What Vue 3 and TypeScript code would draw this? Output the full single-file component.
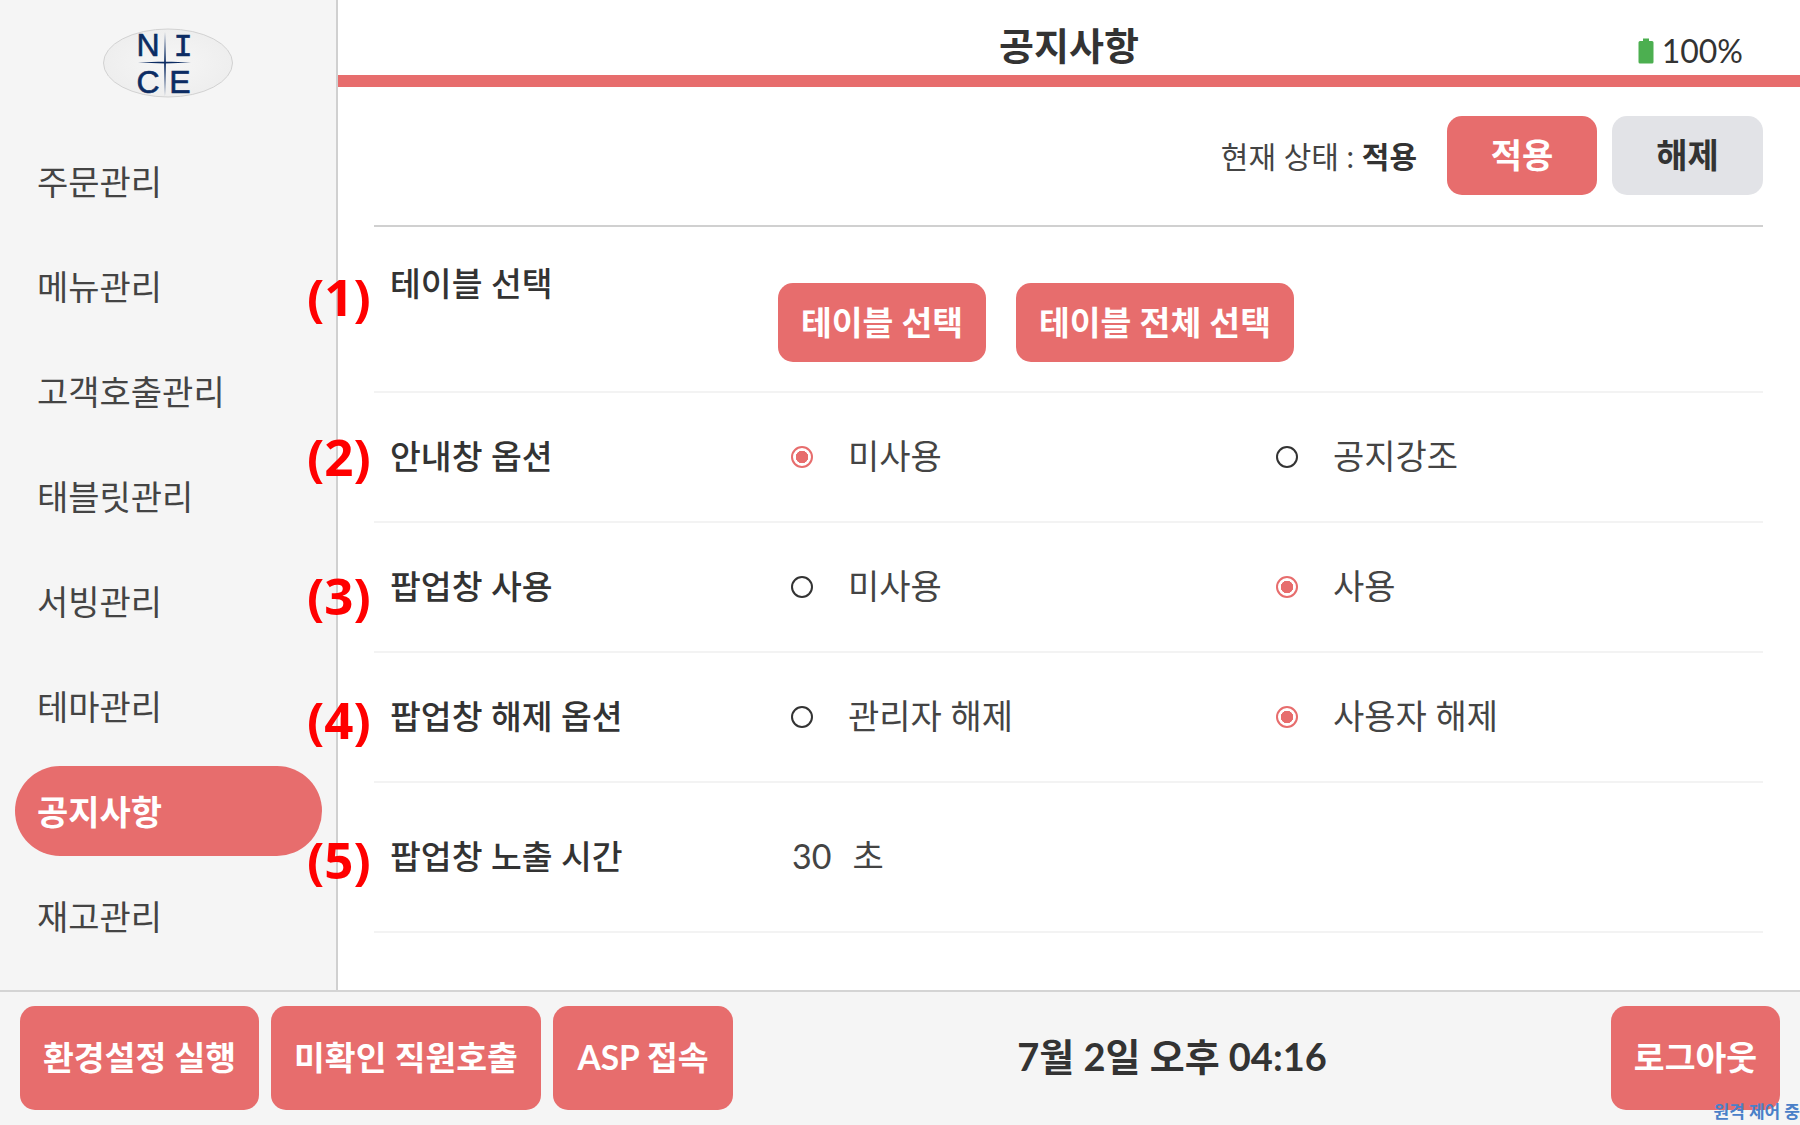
<template>
  <div class="screen">
    <div class="top">
      <aside class="sidebar">
        <div class="logo">
          <svg width="132" height="72" viewBox="0 0 132 72">
            <defs>
              <radialGradient id="logoFill">
                <stop offset="0" stop-color="#f6f6f6" />
                <stop offset="1" stop-color="#eeeeee" />
              </radialGradient>
            </defs>
            <ellipse cx="66" cy="36" rx="64.5" ry="34" fill="url(#logoFill)" stroke="#d2d2d2" stroke-width="1" />
            <path d="M36 35.5 L63 34.6 L89 35.5 L63 36.4 Z M63 5 L63.9 36 L63 69 L62.1 36 Z" fill="#0c2c63" />
            <text x="46" y="29" class="logo-letter">N</text>
            <text x="81" y="29" class="logo-letter serif">I</text>
            <text x="46" y="65.5" class="logo-letter">C</text>
            <text x="78" y="65.5" class="logo-letter">E</text>
          </svg>
        </div>
        <nav class="menu">
          <div v-for="m in menus" :key="m" class="menu-item" :class="{ active: m === '공지사항' }">{{ m }}</div>
        </nav>
      </aside>
      <main class="content">
        <header class="head">
          <h1 class="title">공지사항</h1>
          <div class="battery">
            <svg width="16" height="26" viewBox="0 0 16 26">
              <path d="M5 0.5 H11 V3 H14 Q15.5 3 15.5 4.5 V24 Q15.5 25.5 14 25.5 H2 Q0.5 25.5 0.5 24 V4.5 Q0.5 3 2 3 H5 Z" fill="#4caf50" />
            </svg>
            <span>100%</span>
          </div>
        </header>
        <div class="body">
          <div class="status">
            <span class="status-text">현재 상태 : <b>적용</b></span>
            <button class="btn status-btn">적용</button>
            <button class="btn status-btn gray">해제</button>
          </div>
          <section class="row first">
            <span class="mark m1">(1)</span>
            <div class="label top-label">테이블 선택</div>
            <div class="row-btns">
              <button class="btn table-btn">테이블 선택</button>
              <button class="btn table-btn wide">테이블 전체 선택</button>
            </div>
          </section>
          <section v-for="r in radioRows" :key="r.mark" class="row text-row">
            <span class="mark" :class="r.cls">{{ r.mark }}</span>
            <div class="label">{{ r.label }}</div>
            <label v-for="(o, i) in r.options" :key="o" class="option">
              <span class="radio" :class="{ on: r.selected === i }"></span>
              <span>{{ o }}</span>
            </label>
          </section>
          <section class="row text-row last">
            <span class="mark m5">(5)</span>
            <div class="label">팝업창 노출 시간</div>
            <div class="time-value"><span class="sec">30</span>초</div>
          </section>
        </div>
      </main>
    </div>
    <footer class="footer">
      <div class="foot-btns">
        <button class="btn foot-btn b1">환경설정 실행</button>
        <button class="btn foot-btn b2">미확인 직원호출</button>
        <button class="btn foot-btn b3">ASP 접속</button>
      </div>
      <div class="clock">7월 2일 오후 04:16</div>
      <button class="btn foot-btn logout">로그아웃</button>
      <span class="remote">원격 제어 중</span>
    </footer>
  </div>
</template>

<script setup lang="ts">
const menus: string[] = ['주문관리', '메뉴관리', '고객호출관리', '태블릿관리', '서빙관리', '테마관리', '공지사항', '재고관리']

interface RadioRow {
  mark: string
  cls: string
  label: string
  options: string[]
  selected: number
}

const radioRows: RadioRow[] = [
  { mark: '(2)', cls: 'm2', label: '안내창 옵션', options: ['미사용', '공지강조'], selected: 0 },
  { mark: '(3)', cls: 'm3', label: '팝업창 사용', options: ['미사용', '사용'], selected: 1 },
  { mark: '(4)', cls: 'm4', label: '팝업창 해제 옵션', options: ['관리자 해제', '사용자 해제'], selected: 1 },
]
</script>

<style>
html, body { margin: 0; background: #fff; }
</style>

<style scoped>
.screen {
  width: 1800px;
  height: 1125px;
  display: flex;
  flex-direction: column;
  overflow: hidden;
  color: #333;
  font-family: Lato, "Noto Sans CJK KR", sans-serif;
}
.top { flex: 1; display: flex; min-height: 0; }
.sidebar {
  width: 336px;
  flex: none;
  background: #f5f5f5;
  border-right: 2px solid #d0d0d0;
}
.logo { height: 136px; padding-top: 27px; padding-left: 102px; box-sizing: border-box; }
.logo-letter { font: 400 32px "Liberation Sans", sans-serif; fill: #0c2c63; stroke: #0c2c63; stroke-width: 0.6; text-anchor: middle; }
.logo-letter.serif { font-family: "Liberation Mono", monospace; }
.menu { display: flex; flex-direction: column; gap: 15px; padding: 0 15px; }
.menu-item {
  height: 90px;
  box-sizing: border-box;
  padding: 0 0 2px 22px;
  margin-right: -1px;
  display: flex;
  align-items: center;
  font-size: 34px;
  color: #444;
  border-radius: 45px;
}
.menu-item.active { background: #e76d6d; color: #fff; font-weight: 700; }
.content { flex: 1; min-width: 0; display: flex; flex-direction: column; }
.head {
  height: 75px;
  flex: none;
  border-bottom: 12px solid #e76d6d;
  position: relative;
  display: flex;
  justify-content: center;
}
.title { margin: 19px 0 0; font-size: 38px; line-height: 52px; height: 52px; font-weight: 700; color: #333; }
.battery {
  position: absolute;
  right: 57px;
  top: 33px;
  display: flex;
  align-items: center;
  gap: 8px;
  font-size: 32px;
  font-weight: 400;
  line-height: 36px;
}
.body { padding: 29px 37px 0 36px; }
.status {
  display: flex;
  align-items: center;
  justify-content: flex-end;
  gap: 15px;
  height: 79px;
  padding-bottom: 30px;
  border-bottom: 2px solid #d0d0d0;
}
.status-text { font-size: 30px; color: #444; margin-right: 15px; padding-bottom: 2px; }
.status-text b { color: #333; }
.btn {
  border: none;
  padding: 0;
  background: #e76d6d;
  color: #fff;
  font-family: inherit;
  font-weight: 700;
  border-radius: 15px;
}
.status-btn { width: 150px; height: 79px; font-size: 34px; padding-bottom: 4px; }
.status-btn.gray { width: 151px; background: #e2e3e7; color: #333; }
.row {
  position: relative;
  height: 128px;
  display: flex;
  align-items: center;
  padding-left: 16px;
  border-bottom: 2px solid #f3f3f3;
  font-size: 34px;
}
.row.first { height: 164px; }
.row.last { height: 148px; }
.text-row .label, .text-row .option > span:last-child, .time-value { position: relative; top: -3px; }
.mark {
  position: absolute;
  left: -67px;
  top: 50%;
  transform: translateY(-50%);
  color: #f00;
  font: 700 51px/60px "Open Sans", sans-serif;
}
.m1 { margin-top: -13px; }
.m2 { margin-top: -1px; }
.m3 { margin-top: 8px; }
.m4 { margin-top: 2px; }
.m5 { margin-top: 2px; }
.label { width: 388px; flex: none; font-weight: 500; font-size: 33.5px; color: #333; }
.top-label { align-self: flex-start; margin-top: 30px; }
.row-btns { display: flex; gap: 30px; margin-top: 27px; }
.table-btn { width: 208px; height: 79px; font-size: 33.5px; padding-bottom: 4px; }
.table-btn.wide { width: 278px; }
.option { width: 485px; flex: none; display: flex; align-items: center; gap: 35px; color: #444; }
.radio {
  width: 22px;
  height: 22px;
  margin-left: 13px;
  flex: none;
  box-sizing: border-box;
  border: 2.5px solid #333;
  border-radius: 50%;
  background: #fff;
}
.radio.on { border-color: #e76d6d; background: radial-gradient(circle, #e76d6d 0 6px, #fff 6.5px); }
.time-value { padding-left: 14px; color: #444; }
.sec { margin-right: 21px; }
.footer {
  height: 135px;
  flex: none;
  box-sizing: border-box;
  background: #f5f5f5;
  border-top: 2px solid #d4d4d4;
  padding: 14px 20px 0;
  display: flex;
  align-items: flex-start;
  position: relative;
}
.foot-btns { display: flex; gap: 12px; }
.foot-btn { height: 104px; font-size: 33.5px; padding-bottom: 6px; }
.b1 { width: 239px; }
.b2 { width: 270px; }
.b3 { width: 180px; }
.clock { flex: 1; text-align: center; font-size: 38px; font-weight: 700; line-height: 100px; color: #333; }
.logout { width: 169px; }
.remote {
  position: absolute;
  right: 0;
  bottom: 2px;
  color: #4a80c8;
  font-size: 17px;
  font-weight: 700;
  line-height: 22px;
  white-space: nowrap;
}
</style>
